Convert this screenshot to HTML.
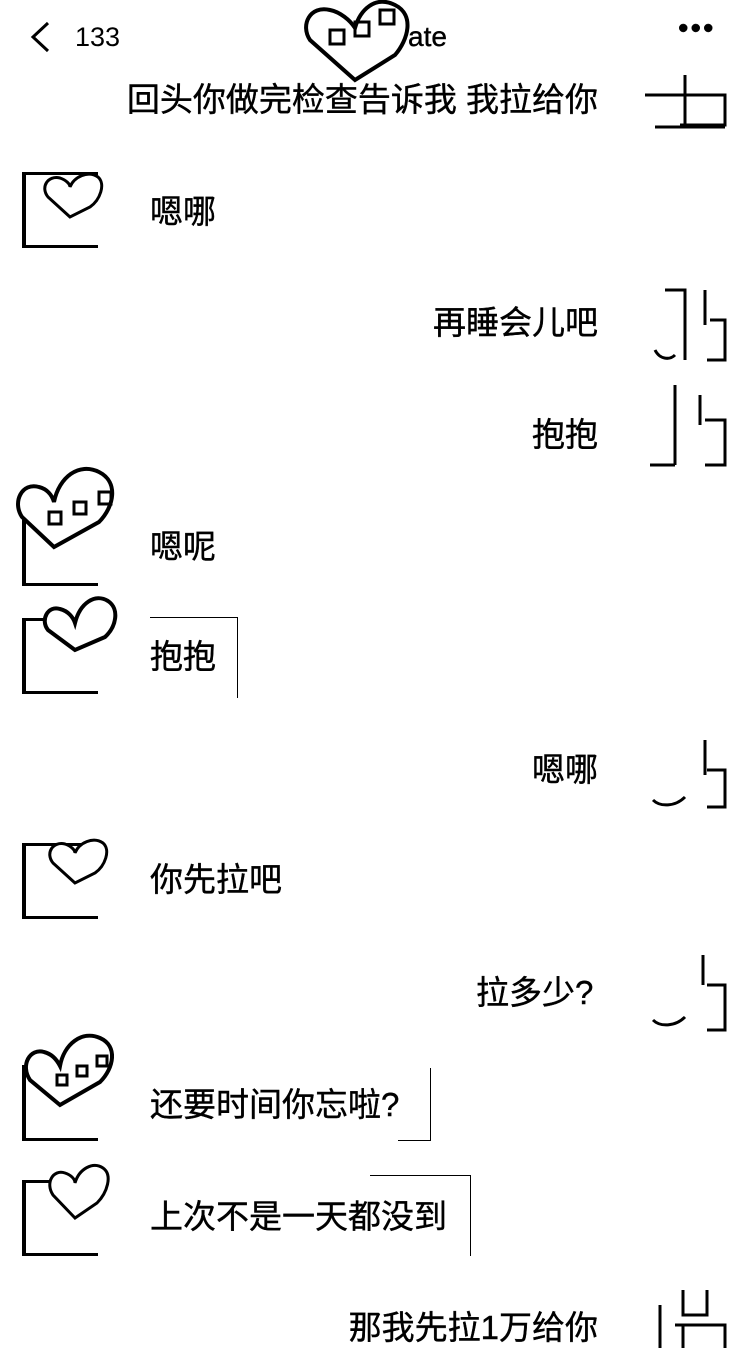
<!DOCTYPE html>
<html><head><meta charset="utf-8"><style>
body{margin:0;width:750px;height:1348px;background:#fff;position:relative;overflow:hidden;font-family:"Liberation Sans","Noto Sans CJK SC",sans-serif;color:#000}
.t{position:absolute;font-size:33px;line-height:38px;white-space:nowrap;-webkit-text-stroke:0.4px #000}
.r{right:152px}
.l{left:150px}
.av{position:absolute;left:22px;width:76px;height:76px;border-left:4px solid #000;border-top:3px solid #000;border-bottom:3px solid #000;box-sizing:border-box}
.ra{position:absolute;left:645px;width:85px;height:85px}
.box{position:absolute;border:1.5px solid #000}
</style></head><body>
<svg style="position:absolute;left:28px;top:20px" width="24" height="34"><path d="M20 3 L5 17 L20 31" fill="none" stroke="#000" stroke-width="3"/></svg>
<div class="t" style="left:75px;top:18px;font-size:27px;-webkit-text-stroke:0">133</div>
<div class="t" style="left:408px;top:18px;font-size:28px">ate</div>
<div class="t" style="left:678px;top:10px;font-size:30px;letter-spacing:2px">•••</div>
<svg style="position:absolute;left:300px;top:0" width="115" height="85"><path d="M55 80 L10 40 C0 25 10 5 30 10 C40 12 50 20 55 28 C60 10 75 -5 95 5 C115 15 108 40 95 55 Z" fill="#fff" stroke="#000" stroke-width="4"/><rect x="30" y="30" width="14" height="14" fill="none" stroke="#000" stroke-width="3"/><rect x="55" y="22" width="14" height="14" fill="none" stroke="#000" stroke-width="3"/><rect x="80" y="10" width="14" height="14" fill="none" stroke="#000" stroke-width="3"/></svg>

<div class="t r" style="top:81px">回头你做完检查告诉我 我拉给你</div>
<div class="t l" style="top:193px">嗯哪</div>
<div class="t r" style="top:304px">再睡会儿吧</div>
<div class="t r" style="top:416px">抱抱</div>
<div class="t l" style="top:528px">嗯呢</div>
<div class="t l" style="top:638px">抱抱</div>
<div class="box" style="left:150px;top:617px;width:87px;height:80px;border-left:none;border-bottom:none"></div>
<div class="t r" style="top:751px">嗯哪</div>
<div class="t l" style="top:861px">你先拉吧</div>
<div class="t" style="left:476px;top:974px">拉多少?</div>
<div class="t l" style="top:1086px">还要时间你忘啦?</div>
<div class="box" style="left:398px;top:1068px;width:32px;height:72px;border-left:none;border-top:none"></div>
<div class="t l" style="top:1198px">上次不是一天都没到</div>
<div class="box" style="left:370px;top:1175px;width:100px;height:80px;border-left:none;border-bottom:none"></div>
<div class="t r" style="top:1309px">那我先拉1万给你</div>

<div class="av" style="top:172px"></div>
<div class="av" style="top:510px"></div>
<div class="av" style="top:618px"></div>
<div class="av" style="top:843px"></div>
<div class="av" style="top:1065px"></div>
<div class="av" style="top:1180px"></div>
<svg style="position:absolute;left:40px;top:172px" width="65" height="50"><path d="M30 45 L8 25 C0 15 8 3 20 6 C26 8 30 12 30 15 C34 5 48 -2 58 5 C66 12 60 28 50 35 Z" fill="#fff" stroke="#000" stroke-width="3"/></svg>
<svg style="position:absolute;left:14px;top:462px" width="105" height="90"><path d="M40 85 L8 55 C-2 40 8 20 25 25 C33 27 38 33 40 40 C45 15 65 0 85 10 C105 20 100 45 85 60 Z" fill="#fff" stroke="#000" stroke-width="4"/><rect x="35" y="50" width="12" height="12" fill="none" stroke="#000" stroke-width="3"/><rect x="60" y="40" width="12" height="12" fill="none" stroke="#000" stroke-width="3"/><rect x="85" y="30" width="12" height="12" fill="none" stroke="#000" stroke-width="3"/></svg>
<svg style="position:absolute;left:40px;top:595px" width="80" height="60"><path d="M35 55 L8 35 C0 25 8 10 20 14 C28 16 33 22 35 28 C40 8 55 -2 68 6 C80 14 76 32 65 42 Z" fill="#fff" stroke="#000" stroke-width="4"/></svg>
<svg style="position:absolute;left:45px;top:838px" width="65" height="50"><path d="M30 45 L8 25 C0 15 8 3 20 6 C26 8 30 12 30 15 C34 5 48 -2 58 5 C66 12 60 28 50 35 Z" fill="#fff" stroke="#000" stroke-width="3"/></svg>
<svg style="position:absolute;left:22px;top:1030px" width="95" height="80"><path d="M38 75 L8 50 C-2 35 8 18 22 22 C30 24 35 30 38 36 C42 14 60 0 78 8 C96 16 92 38 78 52 Z" fill="#fff" stroke="#000" stroke-width="4"/><rect x="35" y="45" width="10" height="10" fill="none" stroke="#000" stroke-width="3"/><rect x="55" y="36" width="10" height="10" fill="none" stroke="#000" stroke-width="3"/><rect x="75" y="26" width="10" height="10" fill="none" stroke="#000" stroke-width="3"/></svg>
<svg style="position:absolute;left:45px;top:1163px" width="70" height="60"><path d="M30 55 L8 32 C0 20 8 6 20 10 C26 12 30 16 30 20 C34 6 48 -2 58 5 C68 12 62 30 52 40 Z" fill="#fff" stroke="#000" stroke-width="3"/></svg>

<svg class="ra" style="top:65px"><path d="M0 30 H40 M40 10 V60 M35 30 H80 V60 H35 M10 62 H80" fill="none" stroke="#000" stroke-width="3"/></svg>
<svg class="ra" style="top:285px"><path d="M20 5 H40 V75 M60 5 V40 M65 35 H80 V75 H62 M10 65 C15 75 25 75 30 70" fill="none" stroke="#000" stroke-width="3"/></svg>
<svg class="ra" style="top:385px"><path d="M30 0 V80 M55 10 V40 M60 35 H80 V80 H60 M5 80 H30" fill="none" stroke="#000" stroke-width="3"/></svg>
<svg class="ra" style="top:735px"><path d="M60 5 V40 M62 35 H80 V72 H62 M8 65 C15 72 30 72 40 62" fill="none" stroke="#000" stroke-width="3"/></svg>
<svg class="ra" style="top:955px"><path d="M58 0 V30 M62 30 H80 V75 H62 M8 65 C15 72 30 72 40 62" fill="none" stroke="#000" stroke-width="3"/></svg>
<svg class="ra" style="top:1285px"><path d="M38 5 V30 H62 V5 M30 40 H80 V63 M38 40 V63 M15 20 V63" fill="none" stroke="#000" stroke-width="3"/></svg>
</body></html>
